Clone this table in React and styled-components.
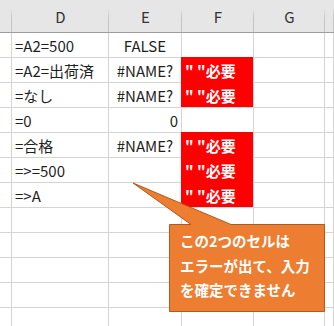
import React from "react";
import styled, { createGlobalStyle } from "styled-components";

const Global = createGlobalStyle`
  html, body { margin: 0; padding: 0; background: #fff; overflow: hidden; }
  body { width: 334px; height: 326px; }
`;

const FONT = `"Noto Sans CJK JP", "Noto Sans", sans-serif`;

const Stage = styled.div`
  position: relative;
  width: 334px;
  height: 326px;
  overflow: hidden;
  font-family: ${FONT};
`;

const Sheet = styled.div`
  display: grid;
  grid-template-columns: 12px 97px 73px 72px 71px 1fr;
  grid-template-rows: 33px;
  grid-auto-rows: 25px;
`;

const HeaderCell = styled.div`
  position: relative;
  background: #e6e6e6;
  border-bottom: 1px solid #9e9e9e;
  display: flex;
  align-items: flex-end;
  justify-content: center;
  padding-bottom: 5px;
  font-size: 15px;
  color: #333;
  box-sizing: border-box;
  &::after {
    content: "";
    position: absolute;
    right: 0;
    top: 9px;
    bottom: 0;
    width: 1px;
    background: linear-gradient(#e0e0e0, #c4c4c4 40%, #c4c4c4);
  }
`;

const Cell = styled.div`
  box-sizing: border-box;
  border-right: 1px solid #d4d4d4;
  border-bottom: 1px solid #d4d4d4;
  background: ${(p) => (p.$red ? "#ff0000" : "#fff")};
  box-shadow: ${(p) => (p.$red ? "-1px -1px 0 #ff0000" : "none")};
  color: ${(p) => (p.$red ? "#fff" : "#1f1f1f")};
  font-weight: ${(p) => (p.$red ? 700 : 400)};
  font-size: 15px;
  white-space: nowrap;
  display: flex;
  align-items: center;
  justify-content: ${(p) =>
    p.$align === "center" ? "center" : p.$align === "right" ? "flex-end" : "flex-start"};
  padding: 0 3px 0 3px;
  overflow: visible;
`;

const Callout = styled.div`
  position: absolute;
  left: 0;
  top: 0;
  width: 334px;
  height: 326px;
  pointer-events: none;
`;

const CalloutText = styled.div`
  position: absolute;
  left: 180px;
  top: 229px;
  color: #fff;
  font-weight: 700;
  font-size: 14.5px;
  line-height: 24.5px;
  white-space: nowrap;
`;

const cols = ["D", "E", "F", "G", ""];

const rows = [
  { d: "=A2=500", e: "FALSE", ea: "center" },
  { d: "=A2=出荷済", e: "#NAME?", ea: "center", f: true },
  { d: "=なし", e: "#NAME?", ea: "center", f: true },
  { d: "=0", e: "0", ea: "right" },
  { d: "=合格", e: "#NAME?", ea: "center", f: true },
  { d: "=>=500", e: "", f: true },
  { d: "=>A", e: "", f: true },
  {}, {}, {}, {}, {},
];

export default function App() {
  return (
    <Stage>
      <Global />
      <Sheet>
        <HeaderCell />
        {cols.map((c, i) => (
          <HeaderCell key={i}>{c}</HeaderCell>
        ))}
        {rows.map((r, i) => (
          <React.Fragment key={i}>
            <Cell />
            <Cell>{r.d}</Cell>
            <Cell $align={r.ea}>{r.e}</Cell>
            <Cell $red={r.f}>{r.f ? "\" \"必要" : ""}</Cell>
            <Cell />
            <Cell />
          </React.Fragment>
        ))}
      </Sheet>
      <Callout>
        <svg width="334" height="326" viewBox="0 0 334 326">
          <polygon
            points="133,183 231,224.5 324.5,224.5 324.5,311.5 169.5,311.5 169.5,224.5 191,224.5"
            fill="#ed7d31"
            stroke="#ae5a21"
            strokeWidth="1"
          />
        </svg>
        <CalloutText>
          この2つのセルは
          <br />
          エラーが出て、入力
          <br />
          を確定できません
        </CalloutText>
      </Callout>
    </Stage>
  );
}
